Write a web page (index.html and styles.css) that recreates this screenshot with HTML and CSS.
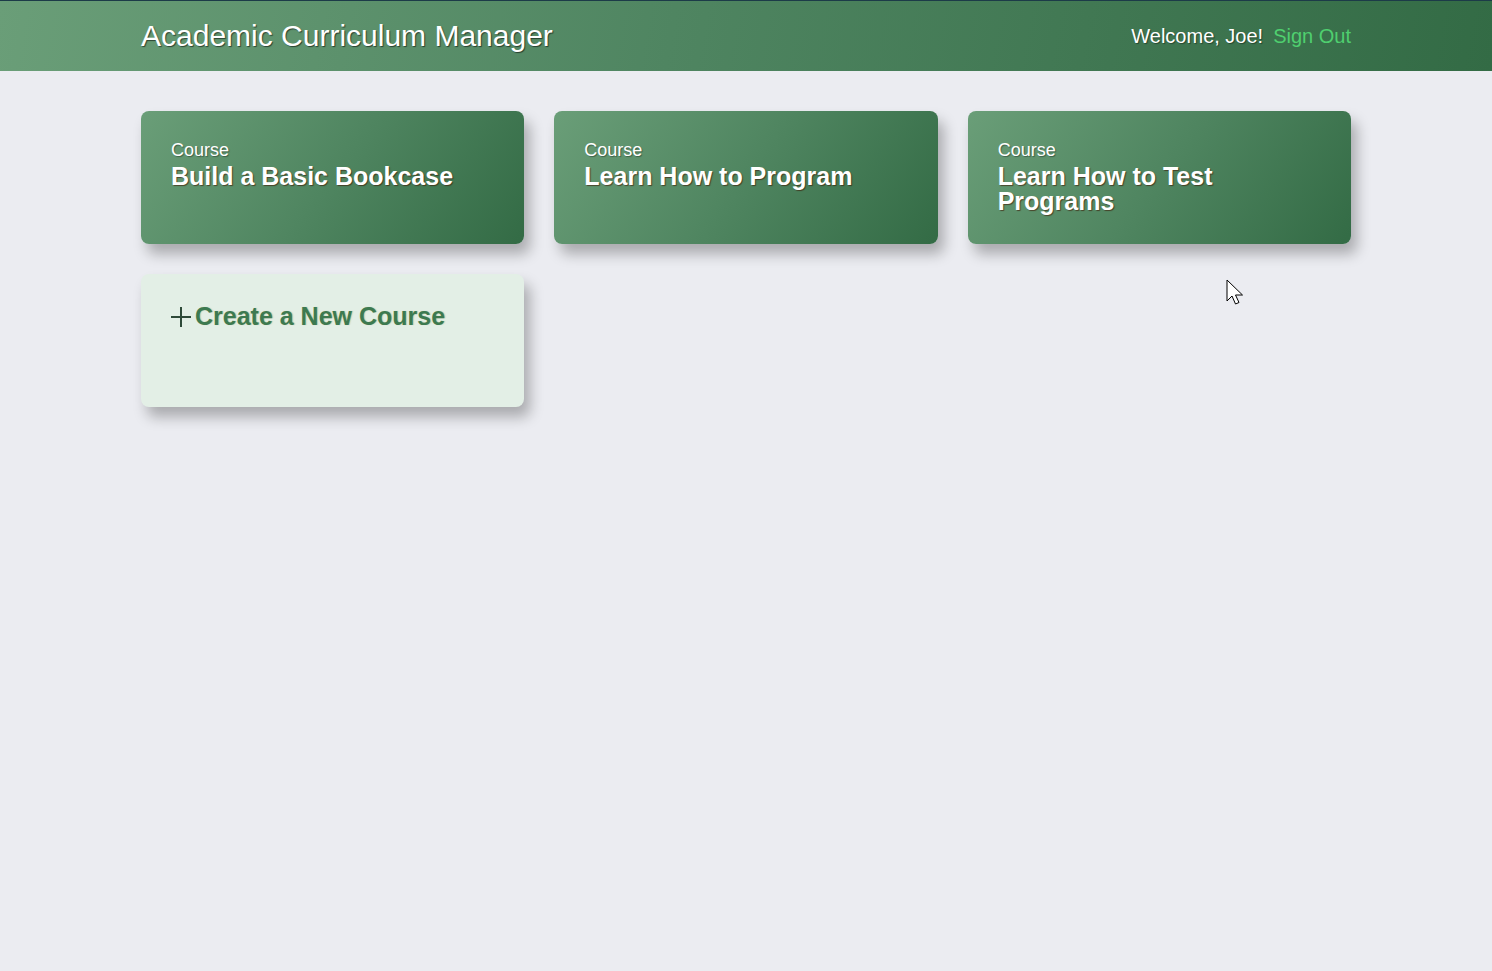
FILE: index.html
```html
<!DOCTYPE html>
<html lang="en">
<head>
<meta charset="utf-8">
<title>Academic Curriculum Manager</title>
<link rel="stylesheet" href="styles.css">
</head>
<body>
<header class="topbar">
  <div class="topbar-inner">
    <h1 class="app-title">Academic Curriculum Manager</h1>
    <div class="user">
      <span class="welcome">Welcome, Joe!</span>
      <a class="signout" href="#">Sign Out</a>
    </div>
  </div>
</header>
<main class="content">
  <div class="grid">
    <a class="card course" href="#">
      <div class="label">Course</div>
      <div class="title">Build a Basic Bookcase</div>
    </a>
    <a class="card course" href="#">
      <div class="label">Course</div>
      <div class="title">Learn How to Program</div>
    </a>
    <a class="card course" href="#">
      <div class="label">Course</div>
      <div class="title">Learn How to Test Programs</div>
    </a>
    <a class="card create" href="#">
      <div class="create-title"><span class="plus"><svg width="22" height="22" viewBox="0 0 22 22"><path d="M11 1V21M1 11H21" stroke="#2e4a39" stroke-width="2" fill="none"/></svg></span>Create a New Course</div>
    </a>
  </div>
</main>
<svg class="cursor" width="20" height="28" viewBox="0 0 20 28"><path d="M1 1V22L6 17L9.5 25L13 23.5L9.5 16H16.5Z" fill="#fff" stroke="#000" stroke-width="1" stroke-linejoin="miter"/></svg>
</body>
</html>
```
FILE: styles.css
```css
* { box-sizing: border-box; }
html, body { margin: 0; padding: 0; }
body {
  background: #ebecf1;
  font-family: "Liberation Sans", Arial, sans-serif;
  min-height: 971px;
}
.topbar {
  height: 71px;
  border-top: 1px solid #1c3b48;
  background: linear-gradient(100deg, #6a9e78 0%, #4f8561 45%, #336b45 100%);
}
.topbar-inner {
  width: 1210px;
  margin: 0 auto;
  height: 70px;
  display: flex;
  align-items: center;
  justify-content: space-between;
}
.app-title {
  margin: 0;
  font-weight: normal;
  font-size: 30px;
  color: #fff;
  text-shadow: 1px 1px 1px rgba(0,0,0,0.55);
}
.user {
  display: flex;
  align-items: center;
  gap: 10px;
  font-size: 20px;
  padding-top: 1px;
}
.welcome {
  color: #fff;
  text-shadow: 1px 1px 1px rgba(0,0,0,0.4);
}
.signout {
  color: #4fcf6f;
  text-decoration: none;
}
.content {
  width: 1210px;
  margin: 0 auto;
  padding-top: 40px;
}
.grid {
  display: grid;
  grid-template-columns: repeat(3, 1fr);
  column-gap: 30px;
  row-gap: 30px;
}
.card {
  display: block;
  height: 133px;
  border-radius: 8px;
  padding: 30px 30px;
  text-decoration: none;
  box-shadow: 6px 10px 14px rgba(0,0,0,0.28);
}
.course {
  background: linear-gradient(125deg, #6a9e78 0%, #4f8560 50%, #336b45 100%);
  color: #fff;
}
.label {
  font-size: 18px;
  line-height: 19px;
  text-shadow: 1px 1px 1px rgba(0,0,0,0.35);
}
.title {
  margin-top: 4px;
  font-size: 25px;
  line-height: 25px;
  font-weight: bold;
  text-shadow: 1px 1px 1px rgba(60,20,0,0.6);
}
.create {
  background: #e3efe6;
  padding-top: 28px;
}
.create-title {
  display: flex;
  align-items: center;
  font-size: 25px;
  font-weight: bold;
  color: #3d7a50;
  text-shadow: 1px 0 1px rgba(120,110,0,0.25);
}
.plus {
  display: inline-flex;
  width: 25px;
  margin-left: -1px;
}
.cursor {
  position: absolute;
  left: 1226px;
  top: 279px;
}
```
